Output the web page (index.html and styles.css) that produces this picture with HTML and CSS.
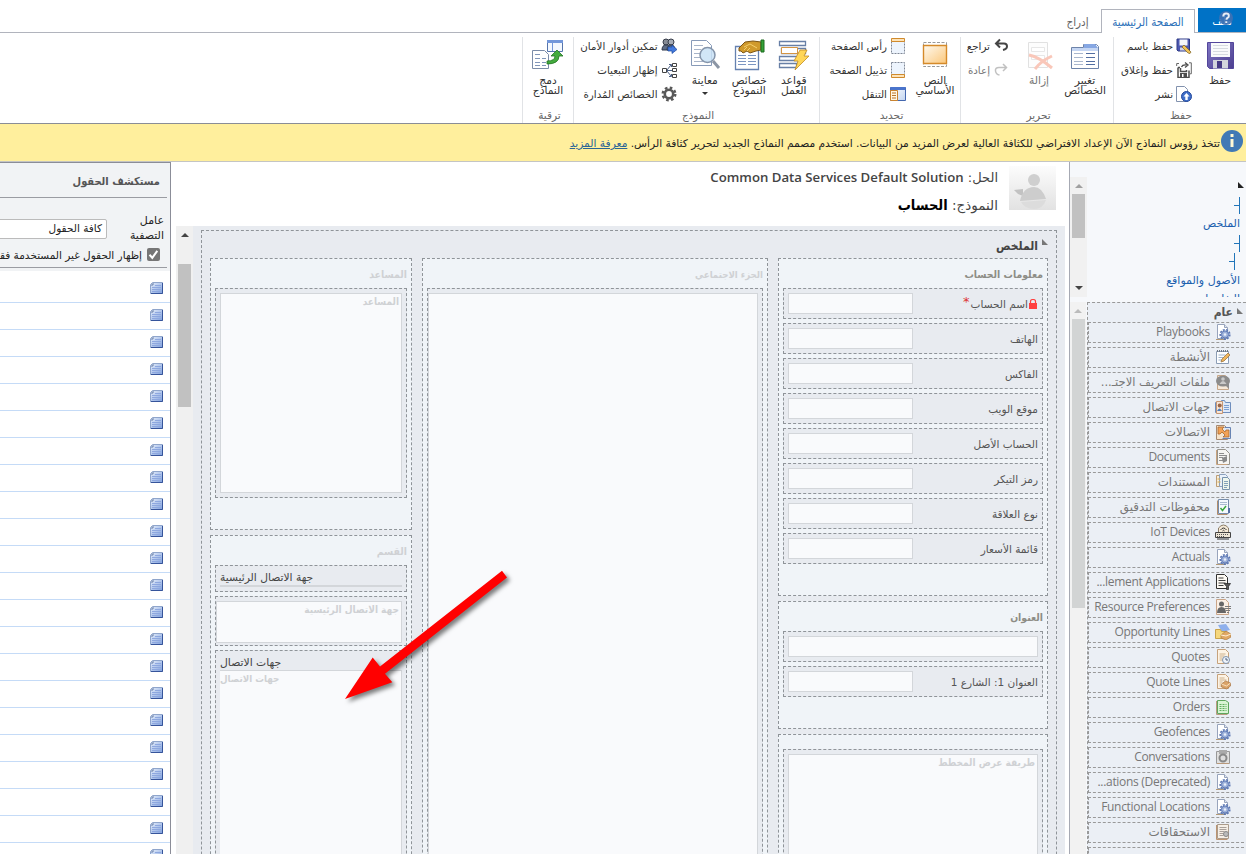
FILE: index.html
```html
<!DOCTYPE html>
<html lang="ar" dir="rtl">
<head>
<meta charset="utf-8">
<title>محرر النماذج</title>
<link rel="stylesheet" href="styles.css">
</head>
<body>
<svg class="defs" width="0" height="0">
  <defs>
    <linearGradient id="gNote" x1="0" y1="0" x2="1" y2="1"><stop offset="0" stop-color="#e8f0fc"/><stop offset="1" stop-color="#7e9fdc"/></linearGradient>
    <linearGradient id="gOr" x1="0" y1="0" x2="1" y2="1"><stop offset="0" stop-color="#fffaf0"/><stop offset="1" stop-color="#fbc77a"/></linearGradient>
    <linearGradient id="gBl" x1="0" y1="0" x2="1" y2="1"><stop offset="0" stop-color="#fff"/><stop offset="1" stop-color="#c3d5f0"/></linearGradient>
    <linearGradient id="gPu" x1="0" y1="0" x2="1" y2="1"><stop offset="0" stop-color="#8076c4"/><stop offset="1" stop-color="#4c3f8f"/></linearGradient>
  </defs>
  <symbol id="note" viewBox="0 0 13 12"><path d="M2.500.5h10v11H.5v-9z" fill="url(#gNote)" stroke="#8fa5cb"/><path d="M12.500 1v10.500H1" fill="none" stroke="#36549b"/><path d="M1 3h2V1" fill="none" stroke="#6b80a8"/><path d="M5 3.500h6M2 5.500h9M2 7.500h9M2 9.500h9" stroke="#8da7df"/></symbol>
  <symbol id="gearpage" viewBox="0 0 16 16"><path d="M2.500.5h7l3 3v11h-10z" fill="#fff" stroke="#98a4bc"/><path d="M9.500.5v3h3" fill="#dfe6f2" stroke="#98a4bc"/><path d="M1 15.500h10" stroke="#b39a77"/><circle cx="10" cy="10.500" r="4.800" fill="none" stroke="#5a76b4" stroke-width="1.600" stroke-dasharray="2 1.300"/><circle cx="10" cy="10.500" r="3.600" fill="#9db1da" stroke="#5a76b4"/><circle cx="10" cy="10.500" r="1.300" fill="#e9effa"/></symbol>
  <symbol id="activity" viewBox="0 0 16 16"><path d="M1.500 2.500h12v12h-12z" fill="#fdfeff" stroke="#8b9db5"/><path d="M2 2h12" stroke="#6e7784" stroke-width="2" stroke-dasharray="1 1"/><path d="M3.500 6h7M3.500 8.500h6M3.500 11h4" stroke="#9fb2c8"/><path d="M6 13l1-3 6-6 2 2-6 6z" fill="#f0b65c" stroke="#9d7643" stroke-width=".8"/></symbol>
  <symbol id="profile" viewBox="0 0 16 16"><path d="M2.500 1.500h8l3 3v11h-11z" fill="#f5e9da" stroke="#c7a789"/><ellipse cx="8" cy="7" rx="7" ry="5.500" fill="#8c8c8c"/><path d="M10 11l4 4v-6z" fill="#8c8c8c"/><circle cx="8" cy="5" r="1.800" fill="#c9c9c9"/><path d="M4.500 10q3.500-6 7 0z" fill="#c9c9c9"/></symbol>
  <symbol id="contact" viewBox="0 0 16 16"><path d="M.5 3.500h5l1-2h3l1 2h5v10H.5z" fill="#dfe9f8" stroke="#6f8ebd"/><path d="M1.500 2.500h6v12h-6z" fill="#f7e4d5" stroke="#c79773"/><circle cx="4.700" cy="6.500" r="2" fill="#9a6548"/><path d="M2 12q2.500-5 5 0z" fill="#4c7fbd"/><path d="M9 6.500h5M9 8.500h5M9 10.500h5" stroke="#7da0d3"/></symbol>
  <symbol id="connect" viewBox="0 0 16 16"><path d="M1.500 1.500h8l3 3v11h-11z" fill="#f6e2c9" stroke="#a68971"/><path d="M9.500 3.500h6v11h-8" fill="#dce7f8" stroke="#6884b3"/><path d="M3 3h6l-2 2 3 3 1-2 3 0v7H8l2-2-3-3-2 2H3z" fill="#f2a257" stroke="#a9682d" stroke-width=".8"/></symbol>
  <symbol id="document" viewBox="0 0 16 16"><path d="M2.500.5h8l4 4v11h-12z" fill="#f6f5f2" stroke="#96938c"/><path d="M1.500 1v14.500h11" fill="none" stroke="#c8a37f"/><path d="M4 4.500h5M4 6.500h8M4 8.500h4M4 11.500h4" stroke="#8d8d8d"/><path d="M7 9l5-2v5l-4 2z" fill="#8a8a8a"/></symbol>
  <symbol id="docs" viewBox="0 0 16 16"><path d="M1.500 1.500h6v11h-6z" fill="#f7edda" stroke="#bd9d75"/><path d="M4.500.5h6l2 2v10h-8z" fill="#e9f1fb" stroke="#8ca1be"/><path d="M7.500 3.500h5l2 2v10h-7z" fill="#eef6ed" stroke="#7792ac"/><path d="M9 7.500h4M9 9.500h4M9 11.500h4M9 13.500h3" stroke="#83a2ba"/><path d="M2.500 5h3M2.500 8h3" stroke="#d8ad50"/></symbol>
  <symbol id="audit" viewBox="0 0 16 16"><path d="M3.500.5h10v14h-10z" fill="#f4f8fd" stroke="#768caa"/><path d="M2.500 1.500v14h10" fill="none" stroke="#b28c6b"/><path d="M5 3.500h7M5 5.500h7" stroke="#a9bad0"/><path d="M5.500 9l2 2.500L11 7" fill="none" stroke="#3aa63f" stroke-width="1.500"/><path d="M14 9v5" stroke="#5470a3" stroke-width="2"/></symbol>
  <symbol id="iot" viewBox="0 0 16 16"><path d="M3.500 8v-4q5-6 10 0v4" fill="#f5ead7" stroke="#8b7c66"/><path d="M5.500 6q3-4 6 0M7.500 7q1-1.500 2 0" fill="none" stroke="#333"/><path d="M.5 8.500h15v5H.5z" fill="#eee6d6" stroke="#444"/><path d="M2 10.500h12M2 12.500h8" stroke="#555" stroke-dasharray="1 1"/><path d="M2 15h12" stroke="#333"/></symbol>
  <symbol id="appl" viewBox="0 0 16 16"><path d="M1.500.5h8l3 3v11h-11z" fill="#fdfaf4" stroke="#303030"/><path d="M3.500 4h5M3.500 6.500h7M3.500 9h7M3.500 11.500h5" stroke="#3f3f3f"/><path d="M9 9.500h6.500l-2 3v3h-2v-3z" fill="#555" stroke="#222" stroke-width=".7"/></symbol>
  <symbol id="resource" viewBox="0 0 16 16"><path d="M1.500.5h9l3 3v12h-12z" fill="#faefe4" stroke="#c9a589"/><circle cx="6.500" cy="5" r="2.500" fill="#666"/><path d="M2 14q0-6 4.500-6t4.500 6z" fill="#666"/><path d="M10 7.500h6M10 9.500h6M11 11.500h4M12 13.500h2" stroke="#7b7b7b"/></symbol>
  <symbol id="opp" viewBox="0 0 16 16"><path d="M3 1l8-1 4 6-8 2z" fill="#8fb0ec"/><path d="M.5 5.500h5l1 2h5v7H.5z" fill="#f5d77c" stroke="#c9a34b"/><path d="M6 11l5-4 5 3v3l-5 3-5-2z" fill="#e0a865" stroke="#a97c47" stroke-width=".7"/><path d="M6 11l5 1 5-2" fill="none" stroke="#fff0d5"/></symbol>
  <symbol id="quote" viewBox="0 0 16 16"><path d="M2.500.5h8l3 3v11h-11z" fill="#fdf3e4" stroke="#c6a27c"/><path d="M4.500 5h6M4.500 7h5M4.500 9h3M4.500 11h3" stroke="#ceb28e"/><circle cx="11" cy="11" r="3.500" fill="#eef3fa" stroke="#7e93ad"/><path d="M11 9v2h2" fill="none" stroke="#50617a"/></symbol>
  <symbol id="quoteline" viewBox="0 0 16 16"><path d="M2.500.5h8l3 3v11h-11z" fill="#fdf3e4" stroke="#c6a27c"/><path d="M4.500 4h5M4.500 6h7M4.500 8h3M4.500 10h2M4.500 12h2" stroke="#ceb28e"/><path d="M6.500 10l4-3 5 2v3l-4 3-5-2z" fill="#dba469" stroke="#a77645" stroke-width=".7"/><path d="M6.500 10l5 2 4-3" fill="none" stroke="#f8dfbd"/></symbol>
  <symbol id="order" viewBox="0 0 16 16"><path d="M2.500 1.500h8l3 2v11h-11z" fill="#d9f4d3" stroke="#5fa65d"/><path d="M1.500 2v13.500h11" fill="none" stroke="#b99b81"/><path d="M4.500 5.500h7M4.500 7.500h7M4.500 9.500h7M4.500 11.500h7" stroke="#5fae5e" stroke-dasharray="2 1"/></symbol>
  <symbol id="conv" viewBox="0 0 16 16"><path d="M1.500 2.500h13v12h-13z" fill="#e0e0df" stroke="#989898"/><path d="M4 1h8v4H4z" fill="#aaa"/><circle cx="8" cy="9" r="3.500" fill="#ddd" stroke="#888" stroke-width="2"/><path d="M2 14.500h12" stroke="#b9997b"/></symbol>
  <symbol id="entitle" viewBox="0 0 16 16"><path d="M2.500.5h11v14h-11z" fill="#f5eee5" stroke="#ab9b8b"/><path d="M1.500 1v14.500h11" fill="none" stroke="#bb9472"/><path d="M4.500 3.500h7M4.500 5.500h7M4.500 7.500h5M4.500 9.500h4M4.500 11.500h4" stroke="#a9a09a"/><circle cx="11" cy="10" r="2.500" fill="#bbb" stroke="#888"/></symbol>
</svg>

<nav class="tabs">
  <a class="tab tab-file">ملف
    <svg class="help" viewBox="0 0 14 14"><circle cx="7" cy="7" r="7" fill="#3f71b4" opacity=".9"/><path d="M4.300 5.400q0-2.900 2.800-2.900t2.700 2.400q0 1.300-1.300 2-1 .6-1 1.800M7.300 10.300v1.700" fill="none" stroke="#e8edf5" stroke-width="2"/></svg>
  </a>
  <a class="tab tab-on">الصفحة الرئيسية</a>
  <a class="tab tab-ins">إدراج</a>
</nav>

<section class="ribbon">
  <div class="group g-save">
    <div class="tools">
      <div class="big b38"><svg viewBox="0 0 32 32"><path d="M3.500 3.500h26v26h-24l-2-2z" fill="url(#gPu)" stroke="#53469b"/><path d="M7 4h19v14H7z" fill="#f9fafb"/><path d="M9 6.500h15M9 9.500h15M9 12.500h15M9 15.500h15" stroke="#d6dae0"/><path d="M9 21h15v8.500H9z" fill="#d3d5dc"/><path d="M13 22h5v7h-5z" fill="#463a84"/></svg><b>حفظ</b></div>
      <div class="stack">
        <div class="small"><svg viewBox="0 0 16 16"><path d="M1 1h12.500v12H2l-1-1z" fill="#4d59b2" stroke="#2e3b86"/><path d="M3.500 1.500h8v6h-8z" fill="#f4f6fb"/><path d="M4 9.500h6v3H4z" fill="#cfd3e8"/><path d="M8 7l7 7-1 1.500-2-.5-6-6z" fill="#f0c256" stroke="#7b6025" stroke-width=".7"/></svg>حفظ باسم</div>
        <div class="small"><svg viewBox="0 0 16 16"><path d="M2 5.500v10h11v-7M2 5.500h2M4.500 6v3.500h6V8" fill="none" stroke="#4d4d4d" stroke-width="1.500"/><path d="M4 11h7v4H4z" fill="#4d4d4d"/><path d="M6 12h1.500v3H6z" fill="#fff"/><path d="M.7 4V1.500H3M13 .8h2.300v11H14" fill="none" stroke="#666"/><path d="M5.500 5q1-2.500 5-2M9 .5L12 3 9 5.500" fill="none" stroke="#4d4d4d" stroke-width="1.300"/></svg>حفظ وإغلاق</div>
        <div class="small"><svg viewBox="0 0 16 16"><path d="M.5.5h8l3 3v12H.5z" fill="#fff" stroke="#8292ae"/><circle cx="10.500" cy="10.500" r="5" fill="#3f6fc9" stroke="#24479b"/><path d="M10.500 7l3 3.500h-1.800V14H9.300v-3.500H7.500z" fill="#fff"/></svg>نشر</div>
      </div>
    </div>
    <h6>حفظ</h6>
  </div>
  <div class="group g-edit">
    <div class="tools">
      <div class="big b46"><svg viewBox="0 0 32 32"><path d="M2.500 8.500h12v-3h13l2 2v22h-27z" fill="#fff" stroke="#6d83a9"/><path d="M15 5h11l3 4H15z" fill="#86a7e3"/><path d="M3 9h26v3H3z" fill="#c5d6f3"/><path d="M5 14.500h9M5 18.500h9M5 22.500h9M5 25.500h9" stroke="#a9b7ce"/><path d="M17 14.500h9M17 18.500h9M17 22.500h9M17 25.500h9" stroke="#526ea1"/></svg><b>تغيير<br>الخصائص</b></div>
      <div class="big b46 off"><svg viewBox="0 0 32 32"><path d="M5.500 3.500h19v25h-19z" fill="#fbfbfb" stroke="#aaa"/><path d="M8.500 8.500h13v4h-13zM8.500 16.500h13v4h-13z" fill="#fff" stroke="#bbb"/><path d="M6 16q10 2 23 13M29 17Q18 22 12 30" fill="none" stroke="#f0603a" stroke-width="3"/></svg><b>إزالة</b></div>
      <div class="stack s-undo">
        <div class="small"><svg viewBox="0 0 16 16"><path d="M7 1.500L3 5.500l4 4M3.500 5.500H11q3 0 3 2.800T10 12" fill="none" stroke="#444" stroke-width="2"/></svg>تراجع</div>
        <div class="small off2"><svg viewBox="0 0 16 16"><path d="M10 2l3.500 3.500L10 9M13 5.500H6Q2 5.500 2.500 9t4 4" fill="none" stroke="#999" stroke-width="1.500"/></svg>إعادة</div>
      </div>
    </div>
    <h6>تحرير</h6>
  </div>
  <div class="group g-select">
    <div class="tools">
      <div class="big b50"><svg viewBox="0 0 32 32"><path d="M4.500 3.500h23v24h-23z" fill="#fff" stroke="#999" stroke-dasharray="3 1.500"/><path d="M4.500 6.500h23v18h-23z" fill="url(#gOr)" stroke="#d58a2a" stroke-width="1.400"/></svg><b>النص<br>الأساسي</b></div>
      <div class="stack s-sel">
        <div class="small hot"><svg viewBox="0 0 16 16"><path d="M1.500 3.500h13v12h-13z" fill="#edf4fd" stroke="#7e8796" stroke-dasharray="2 1"/><path d="M1.500.5h13v3h-13z" fill="#fde3b8" stroke="#d08a2d"/></svg>رأس الصفحة</div>
        <div class="small"><svg viewBox="0 0 16 16"><path d="M1.500.5h13v12h-13z" fill="#edf4fd" stroke="#7e8796" stroke-dasharray="2 1"/><path d="M1.500 12.500h13v3h-13z" fill="#fde3b8" stroke="#d08a2d"/></svg>تذييل الصفحة</div>
        <div class="small"><svg viewBox="0 0 16 16"><path d="M.5 1.500h15v13H.5z" fill="url(#gBl)" stroke="#4467ae"/><path d="M.5 1h15v3H.5z" fill="#4a74cc"/><path d="M.5 4.500h7v10h-7z" fill="#fff6e4" stroke="#ca842f"/><path d="M2 7h4M2 9.500h4M2 12h4" stroke="#b8752b"/></svg>التنقل</div>
      </div>
    </div>
    <h6>تحديد</h6>
  </div>
  <div class="group g-form">
    <div class="tools">
      <div class="big b44"><svg viewBox="0 0 32 32"><path d="M1.500 2.500h26v4h-26zM3.500 9.500h24v5h-24zM1.500 17.500h22v4h-22zM1.500 24.500h17v4h-17z" fill="#fff" stroke="#677fa6" stroke-width="1.300"/><path d="M3.500 8.500h16v6h-16z" fill="#fff" stroke="#d49443"/><path d="M22 11h7l-3 6h5L17 31l3-9h-4z" fill="#ffd657" stroke="#c28b25" stroke-width=".8"/></svg><b>قواعد<br>العمل</b></div>
      <div class="big b44"><svg viewBox="0 0 32 32"><path d="M2.500 7.500h23v23h-23z" fill="#fff" stroke="#6581b0" stroke-width="1.300"/><path d="M5 16.500h8M5 19.500h8M5 22.500h8M5 25.500h8M15 16.500h8M15 19.500h8M15 22.500h8M15 25.500h8" stroke="#7b95c1"/><path d="M6 9l6-6 8-1 8 1v8l-5 1-6 2-3-2-4 2-2-2-2 0z" fill="#d09a2c" stroke="#7c5514"/><path d="M11 8l6-3 7 4M14 12l3-3M11 11l3-3" fill="none" stroke="#f6d16c"/><path d="M28 1h3v12h-3z" fill="#35a236" stroke="#1d6a20"/></svg><b>خصائص<br>النموذج</b></div>
      <div class="big b44 prev"><svg viewBox="0 0 32 32"><path d="M2.500 1.500h15l5 5v20h-20z" fill="#fff" stroke="#879ab8"/><path d="M5 6.500h9M5 10.500h7M5 14.500h6M5 18.500h7M5 22.500h10" stroke="#a7b4c9"/><circle cx="18.500" cy="16" r="7.500" fill="#c9e2f6" fill-opacity=".85" stroke="#8494aa" stroke-width="1.500"/><path d="M24 22l6 7" stroke="#8c96a5" stroke-width="3"/></svg><b>معاينة</b><i class="caret"></i></div>
      <div class="stack s-form">
        <div class="small"><svg viewBox="0 0 16 16"><circle cx="5" cy="4" r="3" fill="#868b95" stroke="#353b48"/><circle cx="10" cy="4" r="3" fill="#a6acb6" stroke="#353b48"/><path d="M1 12q0-5 4-5t4 5zM6 12q0-5 4-5t4 5z" fill="#5f6d85" stroke="#2d3547"/><path d="M7 9h4V7l5 4.500-5 4V13H7z" fill="#4379dc" stroke="#1d4aa1" stroke-width=".7"/></svg>تمكين أدوار الأمان</div>
        <div class="small"><svg viewBox="0 0 16 16"><path d="M1.500 6.500h4v4h-4zM11.500 1.500h4v3h-4zM11.500 6.500h4v3h-4zM11.500 12.500h4v3h-4z" fill="#fff" stroke="#444"/><path d="M6 8.500h5M6 8l4-5M6 9l4 5M8 2.500h2.500V5M8 14.500h2.500V12" fill="none" stroke="#4a5f84"/></svg>إظهار التبعيات</div>
        <div class="small"><svg viewBox="0 0 16 16"><circle cx="8" cy="8" r="6.300" fill="none" stroke="#595959" stroke-width="2.400" stroke-dasharray="2.600 2.350"/><circle cx="8" cy="8" r="4.200" fill="none" stroke="#595959" stroke-width="2.600"/></svg>الخصائص المُدارة</div>
      </div>
    </div>
    <h6>النموذج</h6>
  </div>
  <div class="group g-up">
    <div class="tools">
      <div class="big b50"><svg viewBox="0 0 32 32"><path d="M15.500 1.500h15v11h-15z" fill="#f4f8fe" stroke="#5574ab"/><path d="M15 1h16v3H15z" fill="#7397da"/><path d="M20.500 4v8" stroke="#7397da"/><path d="M.5 11.500h12l4 4v14H.5z" fill="#fff" stroke="#7b8ca8"/><path d="M3 15.500h5M3 19.500h5M3 23.500h5M3 26.500h5M10 19.500h4M10 23.500h4M10 26.500h4" stroke="#8196b9"/><path d="M15 22q8 0 8-5h-4l6-6 6 6h-4q0 8-12 8z" fill="#43ab3d" stroke="#237523" stroke-width=".8"/></svg><b>دمج<br>النماذج</b></div>
    </div>
    <h6>ترقية</h6>
  </div>
</section>

<div class="notice">
  <svg viewBox="0 0 22 22"><circle cx="11" cy="11" r="11" fill="#4179b5"/><path d="M11 9v8M11 4v3" stroke="#fff8d5" stroke-width="3"/></svg>
  <p><span>تتخذ رؤوس النماذج الآن الإعداد الافتراضي للكثافة العالية لعرض المزيد من البيانات. استخدم مصمم النماذج الجديد لتحرير كثافة الرأس.</span> <a>معرفة المزيد</a></p>
</div>

<main class="work">
  <aside class="side">
    <div class="tree">
      <div class="links">
        <i class="corner dark"></i>
        <i class="twig"></i>
        <a class="l-sum">الملخص</a>
        <i class="twig t2"></i>
        <i class="twig t3"></i>
        <a class="l-as">الأصول والمواقع</a>
        <span class="cut"><a>التفاصيل</a></span>
      </div>
      <div class="bar bar-tree"><i class="up pale"></i><i class="thumb"></i><i class="down"></i></div>
    </div>
    <div class="related">
      <div class="rel-list">
        <h5><i class="corner"></i>عام</h5>
        <ul>
          <li><svg><use href="#gearpage"/></svg><span class="en">Playbooks</span></li>
          <li><svg><use href="#activity"/></svg><span>الأنشطة</span></li>
          <li><svg><use href="#profile"/></svg><span class="snug">ملفات التعريف الاجتـ...</span></li>
          <li><svg><use href="#contact"/></svg><span>جهات الاتصال</span></li>
          <li><svg><use href="#connect"/></svg><span>الاتصالات</span></li>
          <li><svg><use href="#document"/></svg><span class="en">Documents</span></li>
          <li><svg><use href="#docs"/></svg><span>المستندات</span></li>
          <li><svg><use href="#audit"/></svg><span>محفوظات التدقيق</span></li>
          <li><svg><use href="#iot"/></svg><span class="en">IoT Devices</span></li>
          <li><svg><use href="#gearpage"/></svg><span class="en">Actuals</span></li>
          <li><svg><use href="#appl"/></svg><span class="en">...lement Applications</span></li>
          <li><svg><use href="#resource"/></svg><span class="en">Resource Preferences</span></li>
          <li><svg><use href="#opp"/></svg><span class="en">Opportunity Lines</span></li>
          <li><svg><use href="#quote"/></svg><span class="en">Quotes</span></li>
          <li><svg><use href="#quoteline"/></svg><span class="en">Quote Lines</span></li>
          <li><svg><use href="#order"/></svg><span class="en">Orders</span></li>
          <li><svg><use href="#gearpage"/></svg><span class="en">Geofences</span></li>
          <li><svg><use href="#conv"/></svg><span class="en">Conversations</span></li>
          <li><svg><use href="#gearpage"/></svg><span class="en">...ations (Deprecated)</span></li>
          <li><svg><use href="#gearpage"/></svg><span class="en">Functional Locations</span></li>
          <li><svg><use href="#entitle"/></svg><span>الاستحقاقات</span></li>
          <li class="end"></li>
        </ul>
      </div>
      <div class="bar bar-rel"><i class="up pale"></i><i class="thumb"></i></div>
    </div>
  </aside>

  <section class="center">
    <header class="head">
      <svg class="avatar" viewBox="0 0 47 44"><defs><linearGradient id="gAv" x1="0" y1="0" x2="0" y2="1"><stop offset="0" stop-color="#fcfcfc"/><stop offset="1" stop-color="#e2e2e2"/></linearGradient></defs><path d="M0 0h47v44H0z" fill="url(#gAv)"/><path d="M5 24l9-1v7l-5-2z" fill="#c2c2c2"/><circle cx="25" cy="14" r="6" fill="#cfcfcf"/><path d="M11 35q3-14 14-14 8 0 12 12-13 1-26 2z" fill="#cdcdcd"/><path d="M12 36q13-1 25-2-3 9-12 9t-13-7z" fill="#dcdcdc"/></svg>
      <div class="titles">
        <p class="sol">الحل: <span class="en" dir="ltr">Common Data Services Default Solution</span></p>
        <p class="frm">النموذج: <b>الحساب</b></p>
      </div>
    </header>
    <div class="stage">
      <div class="canvas">
        <div class="page">
          <h4><i class="corner"></i>الملخص</h4>
          <div class="cols">
            <div class="col c1">
              <div class="sec s338">
                <h3>معلومات الحساب</h3>
                <div class="field"><label><svg viewBox="0 0 8 10"><path d="M0 4h8v6H0z" fill="#ff4040"/><path d="M1.500 5V2.500q0-2 2.500-2t2.500 2V5" fill="none" stroke="#ff4040" stroke-width="1.200"/></svg>اسم الحساب<em>*</em></label><i></i></div>
                <div class="field"><label>الهاتف</label><i></i></div>
                <div class="field"><label>الفاكس</label><i></i></div>
                <div class="field"><label>موقع الويب</label><i></i></div>
                <div class="field"><label>الحساب الأصل</label><i></i></div>
                <div class="field"><label>رمز التيكر</label><i></i></div>
                <div class="field"><label>نوع العلاقة</label><i></i></div>
                <div class="field"><label>قائمة الأسعار</label><i></i></div>
              </div>
              <div class="sec s128">
                <h3>العنوان</h3>
                <div class="field"><i class="wide"></i></div>
                <div class="field"><label>العنوان 1: الشارع 1</label><i></i></div>
              </div>
              <div class="sec s-map">
                <div class="frame"><div class="box">طريقة عرض المخطط</div></div>
              </div>
            </div>
            <div class="col c2">
              <div class="sec s-social">
                <h3 class="faint tight">الجزء الاجتماعي</h3>
                <div class="frame"><div class="box"></div></div>
              </div>
            </div>
            <div class="col c3">
              <div class="sec s-help">
                <h3 class="faint">المساعد</h3>
                <div class="frame"><div class="box">المساعد</div></div>
              </div>
              <div class="sec s-part">
                <h3 class="faint">القسم</h3>
                <div class="line-label"><span>جهة الاتصال الرئيسية</span></div>
                <div class="frame f-main"><div class="box">جهة الاتصال الرئيسية</div></div>
                <div class="frame f-contacts"><p>جهات الاتصال</p><div class="box">جهات الاتصال</div></div>
              </div>
            </div>
          </div>
        </div>
      </div>
      <div class="bar bar-main"><i class="up"></i><i class="thumb"></i></div>
    </div>
  </section>

  <aside class="explorer">
    <h2>مستكشف الحقول</h2>
    <div class="filter"><span class="flabel">عامل<br>التصفية</span><span class="select">كافة الحقول</span></div>
    <div class="check"><svg viewBox="0 0 13 13"><rect width="13" height="13" rx="2" fill="#767676"/><path d="M2.500 6.800l2.800 3 5-7" fill="none" stroke="#fff" stroke-width="2"/></svg><span>إظهار الحقول غير المستخدمة فقط</span></div>
    <ul>
      <li><svg><use href="#note"/></svg></li><li><svg><use href="#note"/></svg></li><li><svg><use href="#note"/></svg></li><li><svg><use href="#note"/></svg></li>
      <li><svg><use href="#note"/></svg></li><li><svg><use href="#note"/></svg></li><li><svg><use href="#note"/></svg></li><li><svg><use href="#note"/></svg></li>
      <li><svg><use href="#note"/></svg></li><li><svg><use href="#note"/></svg></li><li><svg><use href="#note"/></svg></li><li><svg><use href="#note"/></svg></li>
      <li><svg><use href="#note"/></svg></li><li><svg><use href="#note"/></svg></li><li><svg><use href="#note"/></svg></li><li><svg><use href="#note"/></svg></li>
      <li><svg><use href="#note"/></svg></li><li><svg><use href="#note"/></svg></li><li><svg><use href="#note"/></svg></li><li><svg><use href="#note"/></svg></li>
      <li><svg><use href="#note"/></svg></li><li><svg><use href="#note"/></svg></li>
    </ul>
  </aside>
</main>

<svg class="arrow" viewBox="0 0 180 145"><path d="M162 6.700l5 6.800-122 96.300 7.300 8.500L5 135l27.700-41.500 7.300 9z" fill="#f00"/></svg>
</body>
</html>
```
FILE: styles.css
```css
* { box-sizing: border-box; margin: 0; padding: 0; }
html, body { width: 1246px; height: 854px; overflow: hidden; }
body { position: relative; display: flex; flex-direction: column; background: #fff; color: #333; font: 10.500px/12px "DejaVu Sans", sans-serif; white-space: nowrap; }
ul { list-style: none; }
svg { display: block; flex: none; }
i { font-style: normal; display: block; flex: none; }
.defs { position: absolute; }
.en { font-family: "Open Sans", "Noto Sans", sans-serif; direction: ltr; unicode-bidi: isolate; }

/* condensed cut for headings and bold captions */
.tab, .rel-list h5, .frm b, .page h4, .sec h3, .box, .explorer h2 { font-family: "DejaVu Sans Condensed", "DejaVu Sans", sans-serif; font-stretch: condensed; }

/* ribbon tabs */
.tabs { display: flex; align-items: flex-end; height: 33px; flex: none; border-bottom: 1px solid #b1b4bd; }
.tab { display: flex; justify-content: center; align-items: center; height: 24px; color: #666; font-size: 11.500px; padding-top: 1px; }
.tab-file { position: relative; width: 48px; background: #0072c6; color: #fff; margin-left: 3px; }
.help { position: absolute; width: 14px; height: 14px; left: 21px; top: 3px; }
.tab-on { width: 94px; height: 24px; margin-bottom: -1px; color: #2a6fb8; background: #fff; border: 1px solid #b1b4bd; border-bottom: 0; }
.tab-ins { width: 47px; padding-top: 4px; }

/* ribbon */
.ribbon { display: flex; height: 91px; flex: none; padding-top: 4px; border-bottom: 1px solid #8a8d96; }
.group { height: 86px; border-left: 1px solid #e1e3e6; display: flex; flex-direction: column; }
.g-save { width: 133px; padding-right: 6px; }
.g-save h6 { margin-right: -5px; }
.g-edit { width: 153px; padding-right: 5px; }
.g-edit h6 { margin-right: -5px; }
.g-select { width: 141px; }
.g-form { width: 246px; padding-right: 3px; }
.g-form h6 { margin-right: -3px; }
.g-up { width: 51px; }
.tools { display: flex; height: 72px; flex: none; }
.group h6 { font-size: 10.500px; font-weight: 400; color: #666; text-align: center; padding-left: 3px; }
.big { display: flex; flex-direction: column; align-items: center; padding-top: 2px; }
.big svg { width: 32px; height: 32px; }
.big b { font-weight: 400; font-size: 10.700px; line-height: 10px; text-align: center; margin-top: 5px; }
.b38 { width: 40px; }
.b46 { width: 46px; }
.b44 { width: 44.500px; }
.b50 { width: 50px; }
.off svg { opacity: .35; }
.off b, .off2 { color: #777; }
.off2 svg { opacity: .6; }
.caret { border: 3px solid transparent; border-top-color: #333; border-bottom: 0; margin-top: 6px; }
.stack { padding: 1px 8px 0 0; }
.s-undo { padding-right: 7px; }
.s-sel { padding-right: 4px; }
.s-form { padding-right: 6px; }
.small { display: flex; align-items: center; height: 24px; font-size: 10.300px; margin-top: -4px; margin-bottom: 4px; gap: 3px; }
.small svg { width: 16px; height: 16px; }

/* notice */
.notice { display: flex; height: 38px; flex: none; background: #ffef9d; border-bottom: 1px solid #c4c5c4; padding: 6px 3px 0 0; color: #222; }
.notice svg { width: 22px; height: 22px; }
.notice p { font-size: 10.650px; line-height: 14px; padding: 7px 1px 0 0; }
.notice a { color: #2a6496; text-decoration: underline; }

/* work area */
.work { display: flex; flex: 1; min-height: 0; }
.side { width: 177px; flex: none; background: #f6f8fb; border-left: 1px solid #a6a9b3; display: flex; flex-direction: column; }
.tree { display: flex; height: 120px; margin-top: 15px; flex: none; }
.links { flex: 1; display: flex; flex-direction: column; align-items: flex-start; padding: 5px 6px 0 0; overflow: hidden; color: #1b5fae; font-size: 11px; }
.corner { border: 3px solid transparent; border-left-color: #777; border-bottom-color: #777; width: 0; height: 0; }
.dark { border-left-color: #222; border-bottom-color: #222; margin-right: -4px; }
.twig { width: 6px; height: 17px; border-right: 1px solid #2175b9; background: linear-gradient(#2175b9, #2175b9) 0 8px / 6px 1px no-repeat; margin-top: 9px; }
.l-sum { margin-top: 4px; }
.t2 { margin-top: 5px; }
.t3 { margin-top: 1px; margin-right: 5px; }
.l-as { margin-top: 5px; }
.cut { height: 5px; overflow: hidden; margin-top: 6px; }
.bar { background: #f1f1f1; flex: none; display: flex; flex-direction: column; align-items: center; }
.up { border: 4px solid transparent; border-top: 0; border-bottom-color: #444; }
.pale { border-bottom-color: #a0a0a0; }
.down { border: 4px solid transparent; border-bottom: 0; border-top-color: #444; margin-top: auto; margin-bottom: 7px; }
.thumb { width: 13px; background: #c1c1c1; }
.bar-tree { width: 17px; }
.bar-tree .up { margin-top: 7px; }
.bar-tree .thumb { height: 44px; margin-top: 6px; }
.related { flex: 1; display: flex; min-height: 0; padding-top: 5px; }
.bar-rel { width: 16px; background: #f2f2f2; }
.bar-rel .up { margin-top: 7px; border-bottom-color: #bbb; }
.bar-rel .thumb { height: 289px; margin-top: 6px; background: #d2d4d4; }
.rel-list { flex: 1; margin-left: 1px; padding-right: 2px; background: #ebeff5; border-left: 1px dashed #999; border-top: 1px dashed #999; }
.rel-list h5 { display: flex; align-items: flex-start; gap: 4px; height: 19px; padding: 3px 1px 0 0; font-size: 12px; line-height: 12px; color: #555; }
.rel-list h5 .corner { margin-top: 2px; }
.rel-list li { display: flex; align-items: center; height: 21px; margin-bottom: 4px; padding: 0 13px 2px 0; border: 1px dashed #999; border-right: 0; gap: 5px; color: #777; font-size: 11.900px; }
.rel-list li svg { width: 16px; height: 16px; }
.rel-list .en { font-size: 12px; letter-spacing: -.3px; }
.rel-list .snug { font-size: 11.500px; }
.rel-list .end { height: 10px; }

.center { flex: 1; display: flex; flex-direction: column; min-width: 0; padding-right: 4px; }
.head { display: flex; height: 64px; flex: none; padding: 4px 9px 0 0; gap: 11px; }
.avatar { width: 47px; height: 44px; }
.titles { color: #444; font-size: 13px; }
.sol { height: 24px; padding-top: 4px; line-height: 14px; }
.sol .en { font-weight: 600; font-size: 13.200px; }
.frm { padding-top: 8px; line-height: 14px; font-size: 13.500px; }
.frm b { color: #000; font-size: 14.500px; }
.stage { flex: 1; display: flex; min-height: 0; }
.canvas { width: 872px; background: #e8ebf0; padding: 4px 8px 0; overflow: hidden; }
.bar-main { width: 17px; background: #f0f0f0; }
.bar-main .up { margin-top: 7px; }
.bar-main .thumb { height: 143px; margin-top: 27px; }
.page { height: 800px; border: 1px dashed #8f9499; padding: 0 8px; }
.page h4 { display: flex; gap: 4px; height: 27px; padding-top: 8px; font-size: 12px; line-height: 14px; color: #444; }
.cols { display: flex; gap: 10px; align-items: flex-start; }
.col { display: flex; flex-direction: column; gap: 5px; flex: none; }
.c1 { width: 270px; }
.c2 { width: 346px; }
.c3 { width: 202px; }
.sec { border: 1px dashed #8f9499; background: #f0f4f8; padding: 0 4px; display: flex; flex-direction: column; gap: 4px; }
.sec h3 { height: 25px; padding-top: 9px; font-size: 10.400px; font-weight: 700; line-height: 12px; color: #8d8d86; }
.sec h3.faint { color: #cfd1d4; }
.sec h3.tight { font-size: 9.600px; padding-top: 10px; }
.s338 { height: 338px; }
.s128 { height: 128px; }
.s-map { height: 300px; padding-top: 14px; }
.s-map .frame { flex: 1; }
.s-social { height: 750px; }
.s-social .frame { flex: 1; padding-left: 0; }
.s-help { height: 272px; }
.s-help .frame { height: 210px; }
.s-part { height: 500px; }
.field { height: 31px; flex: none; display: flex; justify-content: space-between; border: 1px dashed #8f9499; background: #e8ebf0; padding: 4px; }
.field label { display: flex; padding-top: 5px; color: #555; font-size: 10.500px; }
.field label svg { width: 8px; height: 10px; margin: 1px 1px 0 1px; }
.field em { color: #d33; font-style: normal; font-size: 13px; margin: -2px 1px 0 0; }
.field i { width: 125px; height: 21px; background: #f9fafc; border: 1px solid #d3d6da; margin-right: auto; }
.field i.wide { width: 250px; }
.frame { border: 1px dashed #8f9499; background: #e8ebf0; padding: 4px; display: flex; flex-direction: column; }
.box { flex: 1; background: #f9fafc; border: 1px solid #d3d6da; color: #cfd1d4; font-size: 10px; font-weight: 700; padding: 2px 2px 0; }
.line-label { height: 27px; flex: none; border: 1px dashed #8f9499; background: #e8ebf0; padding: 4px; }
.line-label span { display: block; height: 17px; border-bottom: 2px solid #d3d6da; text-align: left; color: #444; font-size: 10.700px; padding-top: 2px; }
.f-main { height: 50px; flex: none; padding-left: 0; }
.f-main .box { flex: none; height: 42px; }
.f-contacts { flex: 1; }
.f-contacts p { height: 15px; text-align: left; color: #444; font-size: 10.800px; padding-top: 2px; }
.f-contacts .box { text-align: left; border-left: 0; padding: 2px 0 0; font-size: 9.700px; }

/* field explorer */
.explorer { width: 171px; flex: none; border-right: 1px solid #8b8d98; border-top: 1px solid #8b8d98; background: #fff; overflow: hidden; display: flex; flex-direction: column; }
.explorer h2 { height: 35px; flex: none; margin-right: 3px; padding: 12px 7px 0 0; font-size: 11px; line-height: 14px; color: #555; border-bottom: 1px solid #9a9ca2; }
.explorer h2, .filter, .check { background: #f1f3f5; }
.explorer h2 { box-shadow: 3px 0 #f1f3f5; }
.filter { display: flex; height: 48px; flex: none; padding: 15px 6px 0 0; font-size: 10.500px; line-height: 15px; color: #222; }
.flabel { width: 57px; flex: none; font-size: 11px; }
.select { width: 130px; flex: none; height: 20px; margin-top: 6px; background: #fff; border: 1px solid #bbb; border-radius: 2px; padding: 1px 4px 0; }
.check { display: flex; height: 22px; flex: none; padding: 2px 7px 0 0; margin-right: 3px; box-shadow: 3px 0 #f1f3f5, 0 3px #f1f3f5, 3px 3px #f1f3f5; gap: 5px; font-size: 10.500px; line-height: 14px; color: #222; border-bottom: 1px solid #9a9ca2; }
.check svg { width: 13px; height: 13px; }
.explorer ul { padding-top: 8px; }
.explorer li { height: 27px; border-bottom: 1px solid #c5dbf7; padding: 6px 7px 0 0; }
.explorer li svg { width: 13px; height: 12px; }

.arrow { position: absolute; left: 340px; top: 564px; width: 180px; height: 145px; filter: drop-shadow(3px 3px 2px rgba(0, 0, 0, .5)); }
```
